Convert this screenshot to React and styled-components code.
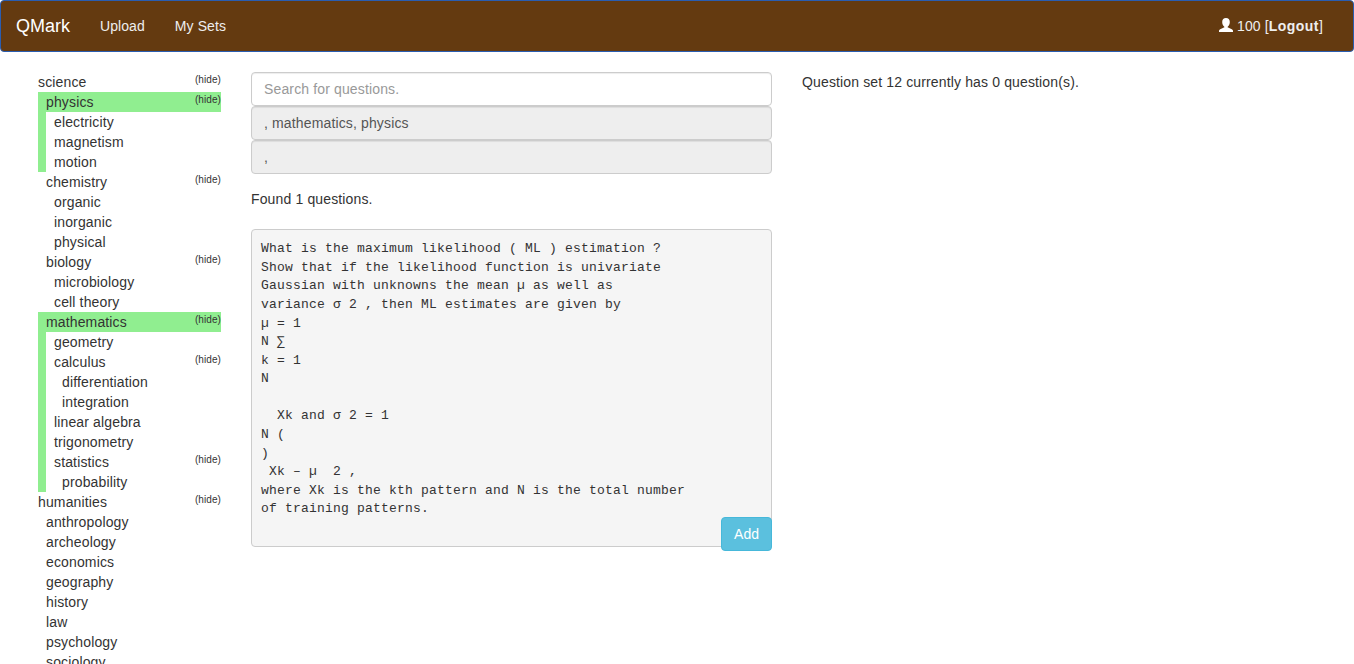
import React from "react";
import styled, { createGlobalStyle, css } from "styled-components";

const GlobalStyle = createGlobalStyle`
  *, *::before, *::after { box-sizing: border-box; }
  html, body { height: 100%; }
  body {
    margin: 0;
    overflow: hidden;
    background: #fff;
    color: #333;
    font: 14px/20px "Liberation Sans", Arial, sans-serif;
    letter-spacing: 0.14px;
  }
`;

const Navbar = styled.nav`
  display: flex;
  align-items: center;
  height: 52px;
  padding: 0 30px 0 15px;
  background: #643a10;
  border: 1px solid #2a5db0;
  border-radius: 4px;
  color: #eee;
`;

const Brand = styled.a`
  margin-right: 30px;
  font-size: 18px;
  letter-spacing: 0;
  color: #fff;
`;

const NavLink = styled.a`
  margin-right: 30px;
  letter-spacing: 0.08px;
`;

const Account = styled.div`
  display: flex;
  align-items: center;
  gap: 4px;
  margin-left: auto;

  b { letter-spacing: 0.45px; }
`;

const UserIcon = styled.svg`
  display: block;
  width: 14px;
  height: 14px;
  fill: #fff;
  transform: translateY(-1px);
`;

const Columns = styled.main`
  display: grid;
  grid-template-columns: 183px 521px 521px;
  column-gap: 30px;
  padding: 20px 0 0 38px;
`;

const TopicList = styled.ul`
  margin: 0;
  padding: 0 0 0 ${(p) => (p.$nested ? "8px" : "0")};
  list-style: none;
`;

const Topic = styled.li`
  background: #fff;
  ${(p) =>
    p.$selected &&
    css`
      background: #90ee90;
    `}
`;

const TopicRow = styled.div`
  display: flex;
  justify-content: space-between;
  height: 20px;
  padding-left: ${(p) => (p.$nested ? "8px" : "0")};
`;

const Toggle = styled.a`
  font-size: 10px;
  line-height: 15px;
  letter-spacing: 0.08px;
`;

const Field = styled.input`
  display: block;
  width: 100%;
  height: 34px;
  padding: 6px 12px;
  border: 1px solid #ccc;
  border-radius: 4px;
  background: ${(p) => (p.readOnly ? "#eee" : "#fff")};
  box-shadow: inset 0 1px 1px rgba(0, 0, 0, 0.075);
  color: #555;
  font: inherit;
  letter-spacing: inherit;
  &::placeholder { color: #999; opacity: 1; }
`;

const Found = styled.p`
  margin: 15px 0 20px;
`;

const Question = styled.div`
  display: flex;
  flex-direction: column;
`;

const QuestionText = styled.pre`
  margin: 0;
  height: 318px;
  padding: 10.22px 9px 9px;
  border: 1px solid #ccc;
  border-radius: 4px;
  background: #f5f5f5;
  font: 13px/18.5714px "Liberation Mono", monospace;
  letter-spacing: 0.2px;
`;

const AddButton = styled.button`
  align-self: flex-end;
  height: 34px;
  margin-top: -30px;
  padding: 6px 12px;
  border: 1px solid #46b8da;
  border-radius: 4px;
  background: #5bc0de;
  color: #fff;
  font: inherit;
`;

const leaves = (...names) => names.map((name) => ({ name }));

const topics = [
  {
    name: "science",
    children: [
      { name: "physics", selected: true, children: leaves("electricity", "magnetism", "motion") },
      { name: "chemistry", children: leaves("organic", "inorganic", "physical") },
      { name: "biology", children: leaves("microbiology", "cell theory") },
      {
        name: "mathematics",
        selected: true,
        children: [
          { name: "geometry" },
          { name: "calculus", children: leaves("differentiation", "integration") },
          { name: "linear algebra" },
          { name: "trigonometry" },
          { name: "statistics", children: leaves("probability") },
        ],
      },
    ],
  },
  {
    name: "humanities",
    children: leaves("anthropology", "archeology", "economics", "geography", "history", "law", "psychology", "sociology"),
  },
];

const question = `What is the maximum likelihood ( ML ) estimation ?
Show that if the likelihood function is univariate
Gaussian with unknowns the mean µ as well as
variance σ 2 , then ML estimates are given by
µ = 1
N ∑
k = 1
N

  Xk and σ 2 = 1
N (
)
 Xk – µ  2 ,
where Xk is the kth pattern and N is the total number
of training patterns.
`;

function TopicTree({ items, depth = 0 }) {
  return items.map((item) => (
    <Topic key={item.name} $selected={item.selected}>
      <TopicRow $nested={depth > 0}>
        <span>{item.name}</span>
        {item.children && <Toggle>(hide)</Toggle>}
      </TopicRow>
      {item.children && (
        <TopicList $nested={depth > 0}>
          <TopicTree items={item.children} depth={depth + 1} />
        </TopicList>
      )}
    </Topic>
  ));
}

export default function App() {
  return (
    <>
      <GlobalStyle />
      <Navbar>
        <Brand>QMark</Brand>
        <NavLink>Upload</NavLink>
        <NavLink>My Sets</NavLink>
        <Account>
          <UserIcon viewBox="0 0 14 14">
            <path d="M7 0C4.600 0 3.200 1.500 3.200 3.900c0 2 .9 3.500 1.900 4.500.4.400.3.900-.2 1.200L1.200 11.200C.4 11.600 0 12 0 12.700V14h14v-1.300c0-.7-.4-1.100-1.200-1.500L9.100 9.600c-.5-.3-.6-.8-.2-1.200 1-1 1.900-2.500 1.900-4.500C10.800 1.500 9.400 0 7 0z" />
          </UserIcon>
          <span>
            100 [<b>Logout</b>]
          </span>
        </Account>
      </Navbar>
      <Columns>
        <TopicList>
          <TopicTree items={topics} />
        </TopicList>
        <section>
          <Field placeholder="Search for questions." />
          <Field readOnly value=", mathematics, physics" />
          <Field readOnly value="," />
          <Found>Found 1 questions.</Found>
          <Question>
            <QuestionText>{question}</QuestionText>
            <AddButton>Add</AddButton>
          </Question>
        </section>
        <section>Question set 12 currently has 0 question(s).</section>
      </Columns>
    </>
  );
}
